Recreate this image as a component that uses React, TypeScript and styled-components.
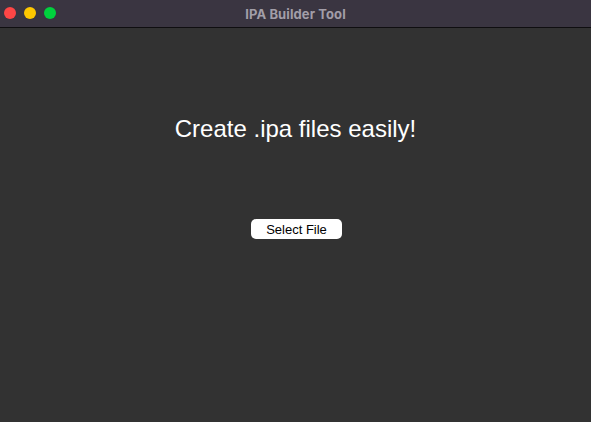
import React from 'react';
import styled, { createGlobalStyle } from 'styled-components';

const GlobalStyle = createGlobalStyle`
  html, body {
    margin: 0;
    padding: 0;
    height: 100%;
    background: #323232;
  }
  #root {
    height: 100%;
  }
`;

const Window = styled.div`
  display: flex;
  flex-direction: column;
  width: 100%;
  height: 100vh;
  background: #323232;
  font-family: 'Liberation Sans', Arial, sans-serif;
  overflow: hidden;
`;

const TitleBar = styled.div`
  position: relative;
  display: flex;
  align-items: center;
  justify-content: center;
  height: 27px;
  flex-shrink: 0;
  background: #3a3541;
  border-bottom: 1px solid #0f0e10;
`;

const Lights = styled.div`
  position: absolute;
  left: 4px;
  top: 7px;
  display: flex;
  gap: 8px;
`;

const Light = styled.span<{ color: string }>`
  width: 12px;
  height: 12px;
  border-radius: 50%;
  background: ${p => p.color};
`;

const Title = styled.span`
  color: #a29ea8;
  font-family: 'Inter', 'Liberation Sans', sans-serif;
  font-size: 13px;
  font-weight: 700;
  letter-spacing: 0.1px;
`;

const Content = styled.main`
  flex: 1;
  display: flex;
  flex-direction: column;
  align-items: center;
  padding-top: 87px;
`;

const Heading = styled.h1`
  margin: 0;
  color: #ffffff;
  font-size: 24px;
  font-weight: 400;
  line-height: 28px;
`;

const Button = styled.button`
  margin-top: 76px;
  margin-left: 2px;
  width: 91px;
  height: 20px;
  padding: 0;
  border: none;
  border-radius: 5px;
  background: #ffffff;
  color: #000000;
  font-family: 'Liberation Sans', Arial, sans-serif;
  font-size: 13px;
  cursor: pointer;
`;

const App: React.FC = () => {
  return (
    <>
      <GlobalStyle />
      <Window>
        <TitleBar>
          <Lights>
            <Light color="#fe4646" />
            <Light color="#fec700" />
            <Light color="#00d13d" />
          </Lights>
          <Title>IPA Builder Tool</Title>
        </TitleBar>
        <Content>
          <Heading>Create .ipa files easily!</Heading>
          <Button>Select File</Button>
        </Content>
      </Window>
    </>
  );
};

export default App;
